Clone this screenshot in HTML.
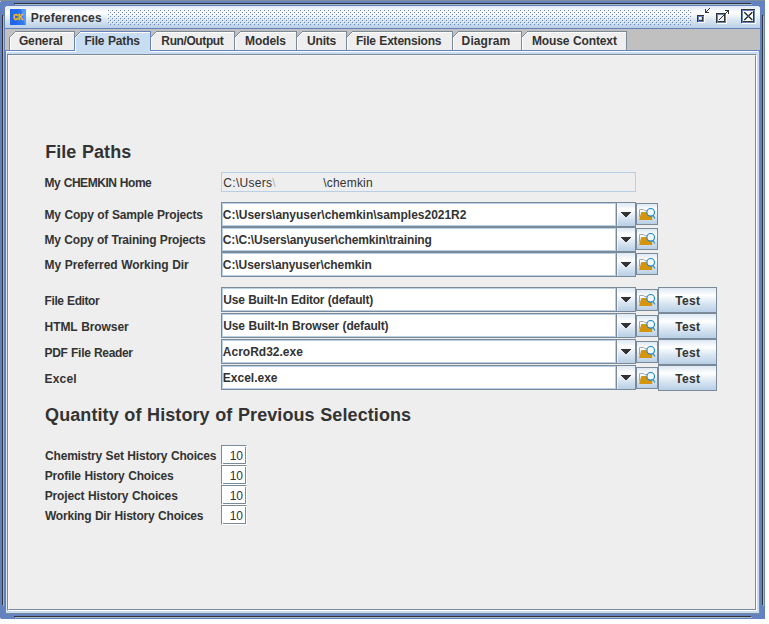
<!DOCTYPE html>
<html><head><meta charset="utf-8"><title>Preferences</title>
<style>
html,body{margin:0;padding:0;background:#fff;}
body{width:769px;height:624px;position:relative;overflow:hidden;font-family:"Liberation Sans",sans-serif;font-size:12px;color:#333;}
div,span,svg{position:absolute;box-sizing:border-box;}
.t{white-space:nowrap;line-height:14px;height:14px;font-weight:bold;word-spacing:0.5px;}
.p{font-weight:normal;word-spacing:0;}
.h{font-size:18px;line-height:20px;height:20px;}
.grad{background:linear-gradient(to bottom,#dde8f3 0%,#ffffff 30%,#dde8f3 60%,#b8cfe5 100%);}
.btn{border:1px solid #7a8a99;}
.ed{background:#fff;border:1px solid #7a8a99;border-right:none;box-shadow:inset 1px 1px 0 #b8cfe5,inset -1px -1px 0 #b8cfe5;}
.tf{background:#fff;}
</style></head><body>

<div style="left:0;top:0;width:765px;height:1px;background:#7f8e9b"></div>
<div id="frame" style="left:0;top:1px;width:765px;height:618px;background:#6382bf">
<div style="left:15px;top:3px;width:737px;height:1px;background:#a3b8cc"></div>
<div style="left:3px;top:15px;width:1px;height:590px;background:#a3b8cc"></div>
<div style="left:763px;top:15px;width:1px;height:590px;background:#a3b8cc"></div>
<div style="left:15px;top:616px;width:737px;height:1px;background:#a3b8cc"></div>
<div style="left:14px;top:2px;width:737px;height:1px;background:#333333"></div>
<div style="left:2px;top:14px;width:1px;height:590px;background:#333333"></div>
<div style="left:762px;top:14px;width:1px;height:590px;background:#333333"></div>
<div style="left:14px;top:615px;width:737px;height:1px;background:#333333"></div>
</div>
<div style="left:0;top:1px;width:1px;height:1px;background:#ddd3c2"></div><div style="left:0;top:618px;width:1px;height:1px;background:#ddd3c2"></div>
<div id="title" class="grad" style="left:5px;top:6px;width:755px;height:23px;border-bottom:1px solid #6382bf">
<div style="left:0;top:0;width:1px;height:1px;background:#6382bf"></div><div style="right:0;top:0;width:1px;height:1px;background:#6382bf"></div>
</div>
<div id="ck" style="left:10px;top:9px;width:16px;height:16px;background:linear-gradient(90deg,#1f62ea 0%,#2a74f1 45%,#4f9cfa 100%);overflow:hidden"><svg style="left:0;top:0" width="16" height="16"><polygon points="5,0 11,0 15,16 2,16" fill="#1d5fe6" opacity="0.45"/><polygon points="11,0 16,0 16,16 15,16" fill="#6ab0ff" opacity="0.25"/></svg><span style="left:2.6px;top:2.5px;font-size:8.6px;line-height:10px;font-weight:bold;color:#fdb414;-webkit-text-stroke:0.5px #fdb414;letter-spacing:-0.2px;transform:scaleX(0.82);transform-origin:0 0">CK</span></div>
<span id="s1" class="t" style="left:30.76px;top:11px;letter-spacing:0.216px;">Preferences</span>
<svg id="bumps" style="left:107px;top:9px" width="584" height="16" shape-rendering="crispEdges"><defs><pattern id="bp" width="4" height="4" patternUnits="userSpaceOnUse"><rect x="0" y="0" width="1" height="1" fill="#fff"/><rect x="2" y="2" width="1" height="1" fill="#fff"/><rect x="1" y="1" width="1" height="1" fill="#6382bf"/><rect x="3" y="3" width="1" height="1" fill="#6382bf"/></pattern></defs><rect width="584" height="16" fill="url(#bp)"/></svg>
<div id="tabarea" style="left:5px;top:29px;width:755px;height:21px;background:#c0c0c0"></div>
<div id="cb" style="left:5px;top:50px;width:755px;height:564px;background:#c8ddf2;border-top:1px solid #6382bf;border-left:1px solid #6382bf;border-right:1px solid #7a8a99;border-bottom:1px solid #7a8a99">
<div style="left:0;top:0;width:752px;height:1px;background:#fff"></div><div style="left:0;top:1px;width:1px;height:560px;background:#deeaf8"></div>
</div>
<div id="panel" style="left:7px;top:54px;width:750px;height:557px;background:#eeeeee;border-top:1px solid #7a8a99;border-left:1px solid #7a8a99;border-right:1px solid #fff;border-bottom:1px solid #fff">
<div style="left:0;top:0;width:748px;height:555px;border-top:1px solid #f7f6f4;border-left:1px solid #f7f6f4;border-right:1px solid #7a8a99;border-bottom:1px solid #7a8a99"></div>
</div>
<svg id="tabs" style="left:0;top:29px" width="769" height="24" viewBox="0 29 769 24" shape-rendering="crispEdges">
<polygon points="9,50 9,38 16,31 74,31 74,50" fill="#eeeeee"/>
<rect x="15" y="31" width="59" height="1" fill="#7a8a99"/>
<rect x="10" y="36" width="1" height="1" fill="#7a8a99"/>
<rect x="11" y="35" width="1" height="1" fill="#7a8a99"/>
<rect x="12" y="34" width="1" height="1" fill="#7a8a99"/>
<rect x="13" y="33" width="1" height="1" fill="#7a8a99"/>
<rect x="14" y="32" width="1" height="1" fill="#7a8a99"/>
<rect x="9" y="37" width="1" height="13" fill="#7a8a99"/>
<rect x="16" y="32" width="58" height="1" fill="#fff"/>
<rect x="11" y="36" width="1" height="1" fill="#fff"/>
<rect x="12" y="35" width="1" height="1" fill="#fff"/>
<rect x="13" y="34" width="1" height="1" fill="#fff"/>
<rect x="14" y="33" width="1" height="1" fill="#fff"/>
<rect x="15" y="32" width="1" height="1" fill="#fff"/>
<rect x="10" y="37" width="1" height="13" fill="#fff"/>
<polygon points="74,52 74,38 81,31 150,31 150,52" fill="#c8ddf2"/>
<rect x="80" y="31" width="70" height="1" fill="#6382bf"/>
<rect x="75" y="36" width="1" height="1" fill="#6382bf"/>
<rect x="76" y="35" width="1" height="1" fill="#6382bf"/>
<rect x="77" y="34" width="1" height="1" fill="#6382bf"/>
<rect x="78" y="33" width="1" height="1" fill="#6382bf"/>
<rect x="79" y="32" width="1" height="1" fill="#6382bf"/>
<rect x="74" y="37" width="1" height="13" fill="#6382bf"/>
<rect x="74" y="31" width="1" height="6" fill="#7a8a99"/>
<rect x="81" y="32" width="69" height="1" fill="#fff"/>
<rect x="76" y="36" width="1" height="1" fill="#fff"/>
<rect x="77" y="35" width="1" height="1" fill="#fff"/>
<rect x="78" y="34" width="1" height="1" fill="#fff"/>
<rect x="79" y="33" width="1" height="1" fill="#fff"/>
<rect x="80" y="32" width="1" height="1" fill="#fff"/>
<rect x="75" y="37" width="1" height="14" fill="#fff"/>
<polygon points="150,50 150,38 157,31 234,31 234,50" fill="#eeeeee"/>
<rect x="156" y="31" width="78" height="1" fill="#7a8a99"/>
<rect x="151" y="36" width="1" height="1" fill="#7a8a99"/>
<rect x="152" y="35" width="1" height="1" fill="#7a8a99"/>
<rect x="153" y="34" width="1" height="1" fill="#7a8a99"/>
<rect x="154" y="33" width="1" height="1" fill="#7a8a99"/>
<rect x="155" y="32" width="1" height="1" fill="#7a8a99"/>
<rect x="150" y="31" width="1" height="20" fill="#6382bf"/>
<rect x="157" y="32" width="77" height="1" fill="#fff"/>
<rect x="152" y="36" width="1" height="1" fill="#fff"/>
<rect x="153" y="35" width="1" height="1" fill="#fff"/>
<rect x="154" y="34" width="1" height="1" fill="#fff"/>
<rect x="155" y="33" width="1" height="1" fill="#fff"/>
<rect x="156" y="32" width="1" height="1" fill="#fff"/>
<rect x="151" y="37" width="1" height="13" fill="#fff"/>
<polygon points="234,50 234,38 241,31 296,31 296,50" fill="#eeeeee"/>
<rect x="240" y="31" width="56" height="1" fill="#7a8a99"/>
<rect x="235" y="36" width="1" height="1" fill="#7a8a99"/>
<rect x="236" y="35" width="1" height="1" fill="#7a8a99"/>
<rect x="237" y="34" width="1" height="1" fill="#7a8a99"/>
<rect x="238" y="33" width="1" height="1" fill="#7a8a99"/>
<rect x="239" y="32" width="1" height="1" fill="#7a8a99"/>
<rect x="234" y="31" width="1" height="19" fill="#7a8a99"/>
<rect x="241" y="32" width="55" height="1" fill="#fff"/>
<rect x="236" y="36" width="1" height="1" fill="#fff"/>
<rect x="237" y="35" width="1" height="1" fill="#fff"/>
<rect x="238" y="34" width="1" height="1" fill="#fff"/>
<rect x="239" y="33" width="1" height="1" fill="#fff"/>
<rect x="240" y="32" width="1" height="1" fill="#fff"/>
<rect x="235" y="37" width="1" height="13" fill="#fff"/>
<polygon points="296,50 296,38 303,31 346,31 346,50" fill="#eeeeee"/>
<rect x="302" y="31" width="44" height="1" fill="#7a8a99"/>
<rect x="297" y="36" width="1" height="1" fill="#7a8a99"/>
<rect x="298" y="35" width="1" height="1" fill="#7a8a99"/>
<rect x="299" y="34" width="1" height="1" fill="#7a8a99"/>
<rect x="300" y="33" width="1" height="1" fill="#7a8a99"/>
<rect x="301" y="32" width="1" height="1" fill="#7a8a99"/>
<rect x="296" y="31" width="1" height="19" fill="#7a8a99"/>
<rect x="303" y="32" width="43" height="1" fill="#fff"/>
<rect x="298" y="36" width="1" height="1" fill="#fff"/>
<rect x="299" y="35" width="1" height="1" fill="#fff"/>
<rect x="300" y="34" width="1" height="1" fill="#fff"/>
<rect x="301" y="33" width="1" height="1" fill="#fff"/>
<rect x="302" y="32" width="1" height="1" fill="#fff"/>
<rect x="297" y="37" width="1" height="13" fill="#fff"/>
<polygon points="346,50 346,38 353,31 452,31 452,50" fill="#eeeeee"/>
<rect x="352" y="31" width="100" height="1" fill="#7a8a99"/>
<rect x="347" y="36" width="1" height="1" fill="#7a8a99"/>
<rect x="348" y="35" width="1" height="1" fill="#7a8a99"/>
<rect x="349" y="34" width="1" height="1" fill="#7a8a99"/>
<rect x="350" y="33" width="1" height="1" fill="#7a8a99"/>
<rect x="351" y="32" width="1" height="1" fill="#7a8a99"/>
<rect x="346" y="31" width="1" height="19" fill="#7a8a99"/>
<rect x="353" y="32" width="99" height="1" fill="#fff"/>
<rect x="348" y="36" width="1" height="1" fill="#fff"/>
<rect x="349" y="35" width="1" height="1" fill="#fff"/>
<rect x="350" y="34" width="1" height="1" fill="#fff"/>
<rect x="351" y="33" width="1" height="1" fill="#fff"/>
<rect x="352" y="32" width="1" height="1" fill="#fff"/>
<rect x="347" y="37" width="1" height="13" fill="#fff"/>
<polygon points="452,50 452,38 459,31 521,31 521,50" fill="#eeeeee"/>
<rect x="458" y="31" width="63" height="1" fill="#7a8a99"/>
<rect x="453" y="36" width="1" height="1" fill="#7a8a99"/>
<rect x="454" y="35" width="1" height="1" fill="#7a8a99"/>
<rect x="455" y="34" width="1" height="1" fill="#7a8a99"/>
<rect x="456" y="33" width="1" height="1" fill="#7a8a99"/>
<rect x="457" y="32" width="1" height="1" fill="#7a8a99"/>
<rect x="452" y="31" width="1" height="19" fill="#7a8a99"/>
<rect x="459" y="32" width="62" height="1" fill="#fff"/>
<rect x="454" y="36" width="1" height="1" fill="#fff"/>
<rect x="455" y="35" width="1" height="1" fill="#fff"/>
<rect x="456" y="34" width="1" height="1" fill="#fff"/>
<rect x="457" y="33" width="1" height="1" fill="#fff"/>
<rect x="458" y="32" width="1" height="1" fill="#fff"/>
<rect x="453" y="37" width="1" height="13" fill="#fff"/>
<polygon points="521,50 521,38 528,31 627,31 627,50" fill="#eeeeee"/>
<rect x="527" y="31" width="100" height="1" fill="#7a8a99"/>
<rect x="522" y="36" width="1" height="1" fill="#7a8a99"/>
<rect x="523" y="35" width="1" height="1" fill="#7a8a99"/>
<rect x="524" y="34" width="1" height="1" fill="#7a8a99"/>
<rect x="525" y="33" width="1" height="1" fill="#7a8a99"/>
<rect x="526" y="32" width="1" height="1" fill="#7a8a99"/>
<rect x="521" y="31" width="1" height="19" fill="#7a8a99"/>
<rect x="528" y="32" width="99" height="1" fill="#fff"/>
<rect x="523" y="36" width="1" height="1" fill="#fff"/>
<rect x="524" y="35" width="1" height="1" fill="#fff"/>
<rect x="525" y="34" width="1" height="1" fill="#fff"/>
<rect x="526" y="33" width="1" height="1" fill="#fff"/>
<rect x="527" y="32" width="1" height="1" fill="#fff"/>
<rect x="522" y="37" width="1" height="13" fill="#fff"/>
<rect x="626" y="31" width="1" height="19" fill="#7a8a99"/>
<rect x="74" y="50" width="1" height="1" fill="#6382bf"/>
<rect x="74" y="51" width="2" height="1" fill="#fff"/>
</svg>
<span id="s2" class="t" style="left:18.90px;top:34px;letter-spacing:-0.124px;">General</span>
<span id="s3" class="t" style="left:84.42px;top:34px;letter-spacing:-0.178px;">File Paths</span>
<span id="s4" class="t" style="left:161.36px;top:34px;letter-spacing:-0.398px;">Run/Output</span>
<span id="s5" class="t" style="left:245.01px;top:34px;letter-spacing:-0.075px;">Models</span>
<span id="s6" class="t" style="left:307.12px;top:34px;letter-spacing:-0.203px;">Units</span>
<span id="s7" class="t" style="left:355.93px;top:34px;letter-spacing:-0.214px;">File Extensions</span>
<span id="s8" class="t" style="left:461.62px;top:34px;letter-spacing:0.105px;">Diagram</span>
<span id="s9" class="t" style="left:532.01px;top:34px;letter-spacing:-0.134px;">Mouse Context</span>
<span id="s10" class="t h" style="left:45.14px;top:142px;letter-spacing:0.063px;">File Paths</span>
<span id="s11" class="t" style="left:44.57px;top:176px;letter-spacing:-0.460px;">My CHEMKIN Home</span>
<div style="left:221px;top:172px;width:415px;height:20px;border:1px solid #b8cfe5"></div>
<span id="s12" class="t p" style="left:223.35px;top:176px;letter-spacing:0.290px;">C:\Users<span style="position:static;color:#b4b4b4">\</span></span>
<span id="s13" class="t p" style="left:323.15px;top:176px;letter-spacing:0.213px;">\chemkin</span>
<span id="s14" class="t" style="left:44.57px;top:208px;letter-spacing:-0.198px;">My Copy of Sample Projects</span>
<div class="ed" style="left:221px;top:202px;width:395px;height:25px"></div>
<span id="s15" class="t" style="left:222.84px;top:208px;letter-spacing:-0.014px;">C:\Users\anyuser\chemkin\samples2021R2</span>
<div class="btn grad" style="left:616px;top:202px;width:20px;height:25px;box-shadow:inset 1px 0 0 rgba(255,255,255,.6)"><svg style="left:4px;top:9px" width="10" height="5" shape-rendering="crispEdges"><rect x="0" y="0" width="10" height="1" fill="#333"/><rect x="1" y="1" width="8" height="1" fill="#333"/><rect x="2" y="2" width="6" height="1" fill="#333"/><rect x="3" y="3" width="4" height="1" fill="#333"/><rect x="4" y="4" width="2" height="1" fill="#333"/></svg></div>
<div class="btn grad" style="left:636px;top:203px;width:22px;height:22px"><svg style="left:0;top:0" width="20" height="20" viewBox="0 0 20 20"><path d="M2.5 13 V5.5 H6.6 L8 6.6 H10.5" fill="none" stroke="#a8a8a8" stroke-width="1"/><path d="M2 16 L4.2 8.6 Q4.4 8 5 8 H15.4 L15.2 16 Z" fill="#d4940c"/><circle cx="13.7" cy="8.3" r="3.8" fill="#f3f8fd" stroke="#1b87cb" stroke-width="1.15"/><path d="M16.1 11.5 L17.9 14.5" stroke="#2a8fd0" stroke-width="1.2" fill="none"/></svg></div>
<span id="s16" class="t" style="left:44.57px;top:233px;letter-spacing:-0.235px;">My Copy of Training Projects</span>
<div class="ed" style="left:221px;top:227px;width:395px;height:25px"></div>
<span id="s17" class="t" style="left:222.84px;top:233px;letter-spacing:-0.143px;">C:\C:\Users\anyuser\chemkin\training</span>
<div class="btn grad" style="left:616px;top:227px;width:20px;height:25px;box-shadow:inset 1px 0 0 rgba(255,255,255,.6)"><svg style="left:4px;top:9px" width="10" height="5" shape-rendering="crispEdges"><rect x="0" y="0" width="10" height="1" fill="#333"/><rect x="1" y="1" width="8" height="1" fill="#333"/><rect x="2" y="2" width="6" height="1" fill="#333"/><rect x="3" y="3" width="4" height="1" fill="#333"/><rect x="4" y="4" width="2" height="1" fill="#333"/></svg></div>
<div class="btn grad" style="left:636px;top:228px;width:22px;height:22px"><svg style="left:0;top:0" width="20" height="20" viewBox="0 0 20 20"><path d="M2.5 13 V5.5 H6.6 L8 6.6 H10.5" fill="none" stroke="#a8a8a8" stroke-width="1"/><path d="M2 16 L4.2 8.6 Q4.4 8 5 8 H15.4 L15.2 16 Z" fill="#d4940c"/><circle cx="13.7" cy="8.3" r="3.8" fill="#f3f8fd" stroke="#1b87cb" stroke-width="1.15"/><path d="M16.1 11.5 L17.9 14.5" stroke="#2a8fd0" stroke-width="1.2" fill="none"/></svg></div>
<span id="s18" class="t" style="left:44.57px;top:258px;letter-spacing:-0.079px;">My Preferred Working Dir</span>
<div class="ed" style="left:221px;top:252px;width:395px;height:25px"></div>
<span id="s19" class="t" style="left:222.84px;top:258px;letter-spacing:-0.070px;">C:\Users\anyuser\chemkin</span>
<div class="btn grad" style="left:616px;top:252px;width:20px;height:25px;box-shadow:inset 1px 0 0 rgba(255,255,255,.6)"><svg style="left:4px;top:9px" width="10" height="5" shape-rendering="crispEdges"><rect x="0" y="0" width="10" height="1" fill="#333"/><rect x="1" y="1" width="8" height="1" fill="#333"/><rect x="2" y="2" width="6" height="1" fill="#333"/><rect x="3" y="3" width="4" height="1" fill="#333"/><rect x="4" y="4" width="2" height="1" fill="#333"/></svg></div>
<div class="btn grad" style="left:636px;top:253px;width:22px;height:22px"><svg style="left:0;top:0" width="20" height="20" viewBox="0 0 20 20"><path d="M2.5 13 V5.5 H6.6 L8 6.6 H10.5" fill="none" stroke="#a8a8a8" stroke-width="1"/><path d="M2 16 L4.2 8.6 Q4.4 8 5 8 H15.4 L15.2 16 Z" fill="#d4940c"/><circle cx="13.7" cy="8.3" r="3.8" fill="#f3f8fd" stroke="#1b87cb" stroke-width="1.15"/><path d="M16.1 11.5 L17.9 14.5" stroke="#2a8fd0" stroke-width="1.2" fill="none"/></svg></div>
<span id="s20" class="t" style="left:44.62px;top:294px;letter-spacing:-0.411px;">File Editor</span>
<div class="ed" style="left:221px;top:287px;width:395px;height:25px"></div>
<span id="s21" class="t" style="left:223.32px;top:293px;letter-spacing:-0.250px;">Use Built-In Editor (default)</span>
<div class="btn grad" style="left:616px;top:287px;width:20px;height:25px;box-shadow:inset 1px 0 0 rgba(255,255,255,.6)"><svg style="left:4px;top:9px" width="10" height="5" shape-rendering="crispEdges"><rect x="0" y="0" width="10" height="1" fill="#333"/><rect x="1" y="1" width="8" height="1" fill="#333"/><rect x="2" y="2" width="6" height="1" fill="#333"/><rect x="3" y="3" width="4" height="1" fill="#333"/><rect x="4" y="4" width="2" height="1" fill="#333"/></svg></div>
<div class="btn grad" style="left:636px;top:289px;width:22px;height:22px"><svg style="left:0;top:0" width="20" height="20" viewBox="0 0 20 20"><path d="M2.5 13 V5.5 H6.6 L8 6.6 H10.5" fill="none" stroke="#a8a8a8" stroke-width="1"/><path d="M2 16 L4.2 8.6 Q4.4 8 5 8 H15.4 L15.2 16 Z" fill="#d4940c"/><circle cx="13.7" cy="8.3" r="3.8" fill="#f3f8fd" stroke="#1b87cb" stroke-width="1.15"/><path d="M16.1 11.5 L17.9 14.5" stroke="#2a8fd0" stroke-width="1.2" fill="none"/></svg></div>
<div class="btn grad" style="left:658px;top:287px;width:59px;height:26px"></div>
<span id="s22" class="t" style="left:675.32px;top:294px;letter-spacing:0.272px;">Test</span>
<span id="s23" class="t" style="left:44.62px;top:320px;letter-spacing:-0.084px;">HTML Browser</span>
<div class="ed" style="left:221px;top:313px;width:395px;height:25px"></div>
<span id="s24" class="t" style="left:223.32px;top:319px;letter-spacing:-0.170px;">Use Built-In Browser (default)</span>
<div class="btn grad" style="left:616px;top:313px;width:20px;height:25px;box-shadow:inset 1px 0 0 rgba(255,255,255,.6)"><svg style="left:4px;top:9px" width="10" height="5" shape-rendering="crispEdges"><rect x="0" y="0" width="10" height="1" fill="#333"/><rect x="1" y="1" width="8" height="1" fill="#333"/><rect x="2" y="2" width="6" height="1" fill="#333"/><rect x="3" y="3" width="4" height="1" fill="#333"/><rect x="4" y="4" width="2" height="1" fill="#333"/></svg></div>
<div class="btn grad" style="left:636px;top:315px;width:22px;height:22px"><svg style="left:0;top:0" width="20" height="20" viewBox="0 0 20 20"><path d="M2.5 13 V5.5 H6.6 L8 6.6 H10.5" fill="none" stroke="#a8a8a8" stroke-width="1"/><path d="M2 16 L4.2 8.6 Q4.4 8 5 8 H15.4 L15.2 16 Z" fill="#d4940c"/><circle cx="13.7" cy="8.3" r="3.8" fill="#f3f8fd" stroke="#1b87cb" stroke-width="1.15"/><path d="M16.1 11.5 L17.9 14.5" stroke="#2a8fd0" stroke-width="1.2" fill="none"/></svg></div>
<div class="btn grad" style="left:658px;top:313px;width:59px;height:26px"></div>
<span id="s25" class="t" style="left:675.32px;top:320px;letter-spacing:0.272px;">Test</span>
<span id="s26" class="t" style="left:44.62px;top:346px;letter-spacing:-0.330px;">PDF File Reader</span>
<div class="ed" style="left:221px;top:339px;width:395px;height:25px"></div>
<span id="s27" class="t" style="left:222.85px;top:345px;letter-spacing:-0.002px;">AcroRd32.exe</span>
<div class="btn grad" style="left:616px;top:339px;width:20px;height:25px;box-shadow:inset 1px 0 0 rgba(255,255,255,.6)"><svg style="left:4px;top:9px" width="10" height="5" shape-rendering="crispEdges"><rect x="0" y="0" width="10" height="1" fill="#333"/><rect x="1" y="1" width="8" height="1" fill="#333"/><rect x="2" y="2" width="6" height="1" fill="#333"/><rect x="3" y="3" width="4" height="1" fill="#333"/><rect x="4" y="4" width="2" height="1" fill="#333"/></svg></div>
<div class="btn grad" style="left:636px;top:341px;width:22px;height:22px"><svg style="left:0;top:0" width="20" height="20" viewBox="0 0 20 20"><path d="M2.5 13 V5.5 H6.6 L8 6.6 H10.5" fill="none" stroke="#a8a8a8" stroke-width="1"/><path d="M2 16 L4.2 8.6 Q4.4 8 5 8 H15.4 L15.2 16 Z" fill="#d4940c"/><circle cx="13.7" cy="8.3" r="3.8" fill="#f3f8fd" stroke="#1b87cb" stroke-width="1.15"/><path d="M16.1 11.5 L17.9 14.5" stroke="#2a8fd0" stroke-width="1.2" fill="none"/></svg></div>
<div class="btn grad" style="left:658px;top:339px;width:59px;height:26px"></div>
<span id="s28" class="t" style="left:675.32px;top:346px;letter-spacing:0.272px;">Test</span>
<span id="s29" class="t" style="left:44.62px;top:372px;letter-spacing:0.143px;">Excel</span>
<div class="ed" style="left:221px;top:365px;width:395px;height:25px"></div>
<span id="s30" class="t" style="left:222.76px;top:371px;letter-spacing:0.008px;">Excel.exe</span>
<div class="btn grad" style="left:616px;top:365px;width:20px;height:25px;box-shadow:inset 1px 0 0 rgba(255,255,255,.6)"><svg style="left:4px;top:9px" width="10" height="5" shape-rendering="crispEdges"><rect x="0" y="0" width="10" height="1" fill="#333"/><rect x="1" y="1" width="8" height="1" fill="#333"/><rect x="2" y="2" width="6" height="1" fill="#333"/><rect x="3" y="3" width="4" height="1" fill="#333"/><rect x="4" y="4" width="2" height="1" fill="#333"/></svg></div>
<div class="btn grad" style="left:636px;top:367px;width:22px;height:22px"><svg style="left:0;top:0" width="20" height="20" viewBox="0 0 20 20"><path d="M2.5 13 V5.5 H6.6 L8 6.6 H10.5" fill="none" stroke="#a8a8a8" stroke-width="1"/><path d="M2 16 L4.2 8.6 Q4.4 8 5 8 H15.4 L15.2 16 Z" fill="#d4940c"/><circle cx="13.7" cy="8.3" r="3.8" fill="#f3f8fd" stroke="#1b87cb" stroke-width="1.15"/><path d="M16.1 11.5 L17.9 14.5" stroke="#2a8fd0" stroke-width="1.2" fill="none"/></svg></div>
<div class="btn grad" style="left:658px;top:365px;width:59px;height:26px"></div>
<span id="s31" class="t" style="left:675.32px;top:372px;letter-spacing:0.272px;">Test</span>
<span id="s32" class="t h" style="left:45.10px;top:405px;letter-spacing:0.083px;">Quantity of History of Previous Selections</span>
<span id="s33" class="t" style="left:45.05px;top:449px;letter-spacing:-0.197px;">Chemistry Set History Choices</span>
<div class="tf" style="left:221px;top:445px;width:26px;height:20px;border-top:1px solid #7a8a99;border-left:1px solid #7a8a99;border-right:1px solid #fff;border-bottom:1px solid #fff"><div style="left:0;top:0;width:24px;height:18px;border-right:1px solid #7a8a99;border-bottom:1px solid #7a8a99"></div><div style="left:23px;top:0;width:1px;height:1px;background:#fff"></div><div style="left:0;top:17px;width:1px;height:1px;background:#fff"></div></div>
<span id="s34" class="t p" style="left:229.67px;top:449px;letter-spacing:-0.192px;">10</span>
<span id="s35" class="t" style="left:44.76px;top:469px;letter-spacing:-0.183px;">Profile History Choices</span>
<div class="tf" style="left:221px;top:465px;width:26px;height:20px;border-top:1px solid #7a8a99;border-left:1px solid #7a8a99;border-right:1px solid #fff;border-bottom:1px solid #fff"><div style="left:0;top:0;width:24px;height:18px;border-right:1px solid #7a8a99;border-bottom:1px solid #7a8a99"></div><div style="left:23px;top:0;width:1px;height:1px;background:#fff"></div><div style="left:0;top:17px;width:1px;height:1px;background:#fff"></div></div>
<span id="s36" class="t p" style="left:229.67px;top:469px;letter-spacing:-0.192px;">10</span>
<span id="s37" class="t" style="left:44.76px;top:489px;letter-spacing:-0.151px;">Project History Choices</span>
<div class="tf" style="left:221px;top:485px;width:26px;height:20px;border-top:1px solid #7a8a99;border-left:1px solid #7a8a99;border-right:1px solid #fff;border-bottom:1px solid #fff"><div style="left:0;top:0;width:24px;height:18px;border-right:1px solid #7a8a99;border-bottom:1px solid #7a8a99"></div><div style="left:23px;top:0;width:1px;height:1px;background:#fff"></div><div style="left:0;top:17px;width:1px;height:1px;background:#fff"></div></div>
<span id="s38" class="t p" style="left:229.67px;top:489px;letter-spacing:-0.192px;">10</span>
<span id="s39" class="t" style="left:44.97px;top:509px;letter-spacing:-0.209px;">Working Dir History Choices</span>
<div class="tf" style="left:221px;top:505px;width:26px;height:20px;border-top:1px solid #7a8a99;border-left:1px solid #7a8a99;border-right:1px solid #fff;border-bottom:1px solid #fff"><div style="left:0;top:0;width:24px;height:18px;border-right:1px solid #7a8a99;border-bottom:1px solid #7a8a99"></div><div style="left:23px;top:0;width:1px;height:1px;background:#fff"></div><div style="left:0;top:17px;width:1px;height:1px;background:#fff"></div></div>
<span id="s40" class="t p" style="left:229.67px;top:509px;letter-spacing:-0.192px;">10</span>
<svg id="wb" style="left:0;top:0" width="769" height="30" shape-rendering="crispEdges"><rect x="742" y="10" width="13" height="13" fill="#6382bf"/><rect x="743" y="11" width="10" height="10" fill="#fdfeff"/><rect x="741" y="9" width="14" height="1" fill="#333333"/><rect x="741" y="9" width="1" height="14" fill="#333333"/><rect x="753" y="11" width="1" height="11" fill="#333333"/><rect x="743" y="21" width="11" height="1" fill="#333333"/><rect x="755" y="10" width="1" height="14" fill="#fff"/><rect x="742" y="23" width="14" height="1" fill="#fff"/><g shape-rendering="auto" stroke="#1e1e1e" stroke-width="1.3" fill="none"><path d="M744.3 12.2 L752.3 20 M752.3 12.2 L744.3 20"/></g><rect shape-rendering="auto" x="747.6" y="15.4" width="1.4" height="1.4" fill="#5577c6"/><rect x="717" y="14" width="9" height="9" fill="#6382bf"/><rect x="718" y="15" width="6" height="6" fill="#eef3fa"/><rect x="716" y="13" width="10" height="1" fill="#333333"/><rect x="716" y="13" width="1" height="10" fill="#333333"/><rect x="724" y="15" width="1" height="7" fill="#333333"/><rect x="718" y="21" width="7" height="1" fill="#333333"/><rect x="726" y="14" width="1" height="10" fill="#fff"/><rect x="717" y="23" width="10" height="1" fill="#fff"/><rect x="719" y="19" width="1" height="1" fill="#333333"/><rect x="720" y="18" width="1" height="1" fill="#333333"/><rect x="721" y="17" width="1" height="1" fill="#333333"/><rect x="722" y="16" width="1" height="1" fill="#333333"/><rect x="723" y="15" width="1" height="1" fill="#333333"/><rect x="724" y="14" width="1" height="1" fill="#333333"/><rect x="725" y="13" width="1" height="1" fill="#333333"/><rect x="726" y="12" width="1" height="1" fill="#333333"/><rect x="727" y="11" width="1" height="1" fill="#333333"/><rect x="725" y="10" width="4" height="1" fill="#333333"/><rect x="728" y="10" width="1" height="4" fill="#333333"/><rect x="698" y="16" width="6" height="6" fill="#6382bf"/><rect x="699" y="17" width="3" height="3" fill="#c3d1ee"/><rect x="697" y="15" width="7" height="1" fill="#333333"/><rect x="697" y="15" width="1" height="7" fill="#333333"/><rect x="702" y="17" width="1" height="4" fill="#333333"/><rect x="699" y="20" width="4" height="1" fill="#333333"/><rect x="704" y="16" width="1" height="7" fill="#fff"/><rect x="698" y="22" width="7" height="1" fill="#fff"/><rect x="699" y="17" width="2" height="2" fill="#fff"/><rect x="706" y="11" width="1" height="1" fill="#333333"/><rect x="707" y="10" width="1" height="1" fill="#333333"/><rect x="708" y="9" width="1" height="1" fill="#333333"/><rect x="709" y="8" width="1" height="1" fill="#333333"/><rect x="705" y="9" width="1" height="4" fill="#333333"/><rect x="705" y="12" width="4" height="1" fill="#333333"/></svg>
</body></html>
